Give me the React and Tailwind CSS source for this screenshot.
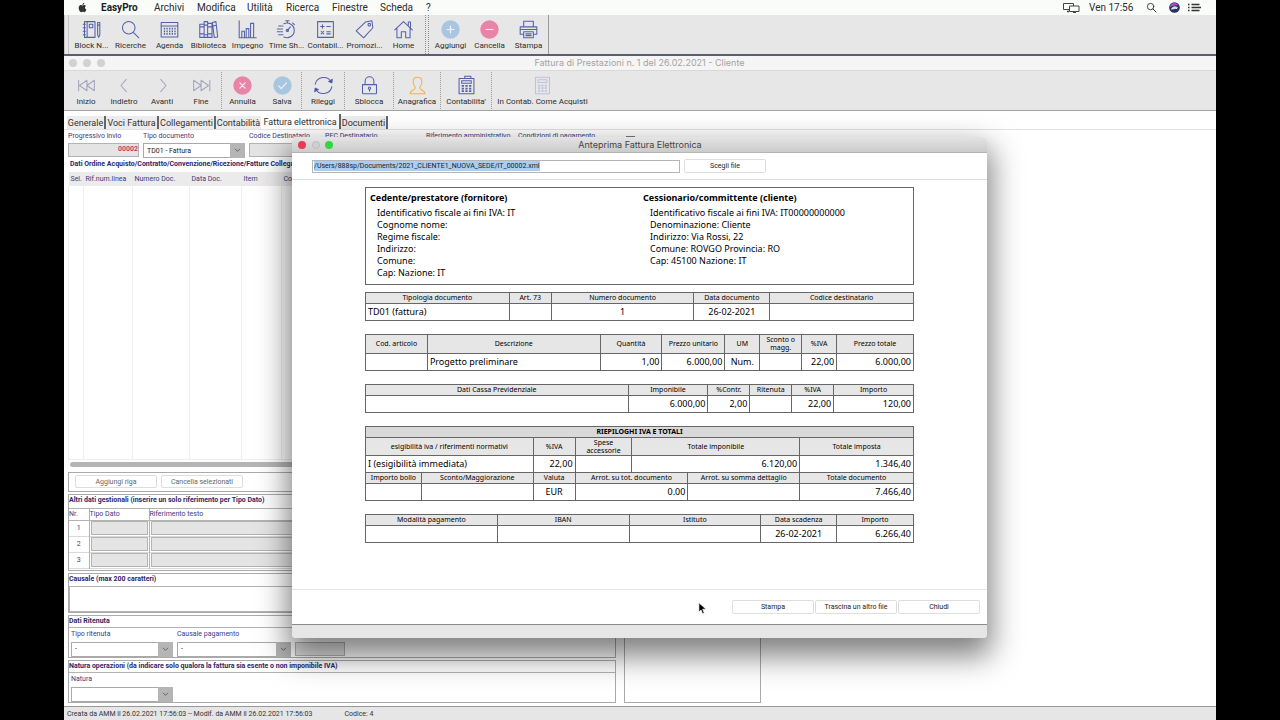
import React from "react";

const NAVY = "#5460ac";

function Icon({ children, size = "size-[21px]", color = NAVY }) {
  return (
    <svg viewBox="0 0 24 24" className={size} fill="none" stroke={color} strokeWidth="1.2" strokeLinecap="round" strokeLinejoin="round" aria-hidden="true">
      {children}
    </svg>
  );
}

const icons = {
  notebook: (
    <Icon>
      <path d="M4 3h12v18H4zM7 3v18M9.500 6h4v4h-4zM2.500 6h2.500M2.500 10h2.500M2.500 14h2.500M2.500 18h2.500" />
      <path d="M19 4h2.500v14L20.200 21 19 18zM19 7h2.500" />
    </Icon>
  ),
  search: (
    <Icon>
      <circle cx="10" cy="10" r="7.200" />
      <path d="m15.500 15.500 6 6" />
    </Icon>
  ),
  agenda: (
    <Icon>
      <path d="M2.500 4h19v16.500h-19zM2.500 8h19" />
      <path d="M5.500 11h13.500M5.500 14h13.500M5.500 17h13.500" strokeWidth="2" strokeDasharray="1.500 1.500" strokeLinecap="butt" />
    </Icon>
  ),
  library: (
    <Icon>
      <path d="M2 6h5v15H2zM7 3h4v18H7zM11 5h5v16h-5zM16.500 4l4-1 2 17.500-4 .5zM2 9h5M2 17h5M7 7h4M7 18h4M11 9h5M11 17h5M17 8l4-.8" />
    </Icon>
  ),
  bars: (
    <Icon>
      <path d="M2.500 2v19.500H22M5.500 21v-7h3v7M10.500 21V11h3v10M15.500 21V5h3.500v16" />
    </Icon>
  ),
  watch: (
    <Icon>
      <path d="M9 5.500a8.300 8.300 0 1 1 0 15M11 2h4M13 2v2.500M19 4.500l2 2M13 13l3.500-4" />
      <path d="M3 8h5M1.500 11.500h6M1.500 14.500h6M3 18h5" strokeDasharray="3 1" />
      <circle cx="13" cy="13" r="1.300" />
    </Icon>
  ),
  calc: (
    <Icon>
      <path d="M3 3h18v18H3zM6.500 8.500h4M8.500 6.500v4M13.500 8.500h4M7 14l3 3M10 14l-3 3M13.500 14.500h4M13.500 17h4" />
    </Icon>
  ),
  tag: (
    <Icon>
      <path d="M13 3.500 20.500 2l1 8L11 21.500 2.500 13.500z" />
      <circle cx="17.500" cy="6.500" r="1.500" />
    </Icon>
  ),
  home: (
    <Icon>
      <path d="M2 12.500 12 3l10 9.500M4.500 11v10.500h5V14.500h5v7h5V11M17.500 7.500V3.500h2.500V10" />
    </Icon>
  ),
  printer: (
    <Icon>
      <path d="M6.500 9V2.500h11V9M6.500 17.500h-4V9h19v8.500h-4M6.500 14.500h11v7h-11zM9 17h6M9 19h6M2.500 12h19" />
    </Icon>
  ),
  first: (
    <Icon color="#a3a6be">
      <path d="M3 6v12M12.500 6v12L4 12zM21 6v12l-8.500-6z" />
    </Icon>
  ),
  prev: (
    <Icon color="#a3a6be">
      <path d="m14 5-6 7 6 7" />
    </Icon>
  ),
  next: (
    <Icon color="#a3a6be">
      <path d="m10 5 6 7-6 7" />
    </Icon>
  ),
  last: (
    <Icon color="#a3a6be">
      <path d="M3 6v12l8.500-6zM11.500 6v12L20 12zM21.500 6v12" />
    </Icon>
  ),
  reload: (
    <Icon>
      <path d="M2.500 10.500a10 10 0 0 1 18.500-2.500M21.500 13.500A10 10 0 0 1 3 16" />
      <path d="m18 7.500 3.500 1.500.5-4zM6 16.500 2.500 15l-.5 4z" fill="#3b478f" />
    </Icon>
  ),
  lock: (
    <Icon>
      <path d="M4 11h16v9.500a1 1 0 0 1-1 1H5a1 1 0 0 1-1-1zM7 11V7a5 5 0 0 1 10 0v4" />
      <circle cx="12" cy="15" r="1.300" />
      <path d="M12 16.500v2" />
    </Icon>
  ),
  person: (
    <Icon color="#f0b252">
      <path d="M12 2.500c-3.300 0-5 2.300-5 5.500 0 2.600 1.400 4.300 2.200 5.500.6 1-.2 2.500-1.700 3.300C5.500 17.800 3.500 18.500 3.500 21.500h17c0-3-2-3.700-4-4.700-1.500-.8-2.300-2.300-1.700-3.300.8-1.200 2.200-2.900 2.200-5.500 0-3.200-1.700-5.500-5-5.500z" />
    </Icon>
  ),
  ledger: (
    <Icon>
      <path d="M3.500 4h17v17.500h-17zM6.500 6.500h11v3h-11zM10 4V1.500h7V4" />
      <path d="M6.500 12.500h11M6.500 15.500h11M6.500 18.500h11" strokeWidth="2" strokeDasharray="2.600 1.600" strokeLinecap="butt" />
    </Icon>
  ),
  ledgerOff: (
    <Icon color="#bfc2dd">
      <path d="M4 2.500h16v19H4zM7 5.500h10v3H7z" />
      <path d="M7 12h10M7 15h10M7 18h10" strokeWidth="2" strokeDasharray="2.300 1.500" strokeLinecap="butt" />
    </Icon>
  ),
};

function Disc({ fill, d }) {
  return (
    <svg viewBox="0 0 24 24" className="size-[21px]" aria-hidden="true">
      <circle cx="12" cy="12" r="10.500" fill={fill} />
      <path d={d} stroke="#eef0fa" strokeWidth="1.400" fill="none" strokeLinecap="round" strokeLinejoin="round" />
    </svg>
  );
}

const discs = {
  add: <Disc fill="#a9c6e0" d="M12 8v8M8 12h8" />,
  remove: <Disc fill="#e884a8" d="M8 12h8" />,
  cancel: <Disc fill="#e884a8" d="m9 9 6 6M15 9l-6 6" />,
  save: <Disc fill="#a9c6e0" d="m7.500 12.500 3 3 6-6.500" />,
};

function ToolButton({ icon, label, width }) {
  return (
    <button type="button" className={`flex shrink-0 flex-col items-center gap-px whitespace-nowrap pt-[4px] text-[8px] leading-[10px] text-[#2c2c2c] ${width}`}>
      {icon}
      <span>{label}</span>
    </button>
  );
}

function Dots() {
  return <span className="my-px w-px shrink-0 border-l border-dotted border-[#9d9d9d]" />;
}

const menus = [
  ["Archivi", "w-[43px]"],
  ["Modifica", "w-[50px]"],
  ["Utilità", "w-[39px]"],
  ["Ricerca", "w-[46px]"],
  ["Finestre", "w-[48px]"],
  ["Scheda", "w-[46px]"],
  ["?", "w-[10px]"],
];

function MenuBar() {
  return (
    <nav className="flex h-[15px] items-center bg-[#fafcfa] text-[10px] leading-[15px] text-[#2b2b2b]">
      <svg viewBox="0 0 24 24" className="ml-[13px] mr-[13px] size-[11px]" fill="#333" aria-label="Apple">
        <path d="M17.400 12.700c0-2.600 2.100-3.800 2.200-3.900-1.200-1.800-3.100-2-3.700-2-1.600-.2-3.100.9-3.900.9s-2-.9-3.300-.9C7 6.800 5.400 7.800 4.500 9.300c-1.800 3.100-.5 7.700 1.300 10.200.9 1.300 1.900 2.700 3.300 2.600 1.300 0 1.800-.8 3.400-.8s2 .8 3.400.8 2.300-1.300 3.200-2.500c1-1.500 1.400-2.900 1.400-3-.1 0-3.100-1.200-3.100-3.900zM14.900 5.100c.7-.9 1.200-2 1-3.200-1 .1-2.200.7-2.900 1.500-.7.800-1.300 2-1.100 3.100 1.100.1 2.300-.6 3-1.400z" />
      </svg>
      <a href="#easypro" className="w-[53px] font-bold text-[#1c1c1c]">EasyPro</a>
      {menus.map(([m, w]) => (
        <a key={m} href="#menu" className={w}>{m}</a>
      ))}
      <div className="ml-auto flex items-center pr-[15px]">
        <svg viewBox="0 0 17 11" className="mr-[9px] h-[11px] w-[17px]" fill="none" stroke="#444" aria-label="Schermi">
          <path d="M6 7.500H.5v-6h10V4M6.500 4h9.500v5.500H6.500z" />
          <path d="M4 9.500h2M10 10.500h3" strokeWidth="1.500" />
        </svg>
        <span className="w-[57px]">Ven 17:56</span>
        <Icon size="size-[11px]" color="#333"><circle cx="10" cy="10" r="7" strokeWidth="2" /><path d="m15 15 7 7" strokeWidth="2" /></Icon>
        <svg viewBox="0 0 12 12" className="ml-[12px] mr-[8px] size-[11px]" aria-label="Siri">
          <circle cx="6" cy="6" r="5.800" fill="#2b2d63" />
          <path d="M1 6a5 5 0 0 1 9.500-2C8 3 4 3.500 1 6z" fill="#b54fc0" />
          <path d="M2 8c2-4 5-4 8-2-2 1-5 3-8 2z" fill="#8fd8f2" />
          <path d="M3 7.500c2-1.500 4-1.500 6 0" stroke="#fff" fill="none" />
        </svg>
        <svg viewBox="0 0 13 9" className="h-[9px] w-[13px]" stroke="#333" strokeWidth="1.300" aria-label="Centro notifiche">
          <path d="M0 1.500h1.500M0 4.500h1.500M0 7.500h1.500M3.500 1.500h8M3.500 4.500h9.500M3.500 7.500h8" />
        </svg>
      </div>
    </nav>
  );
}

function MainToolbar() {
  const a = [
    ["notebook", "Block N..."], ["search", "Ricerche"], ["agenda", "Agenda"], ["library", "Biblioteca"], ["bars", "Impegno"],
    ["watch", "Time Sh..."], ["calc", "Contabil..."], ["tag", "Promozi..."], ["home", "Home"],
  ];
  return (
    <div className="flex h-[41px] border-b-2 border-[#5c5c78] bg-[#e7e7e7]">
      <div className="flex h-full border-r border-[#9a9a9a]">
        <span className="mr-[3px] w-[5px] border-x border-[#c4c4c4]" />
        {a.map(([i, l]) => <ToolButton key={l} icon={icons[i]} label={l} width="w-[39px]" />)}
        <span className="ml-[2px] mr-[2px] w-[4px] border-x border-dotted border-[#8d8d8d]" />
        <ToolButton icon={discs.add} label="Aggiungi" width="w-[39px]" />
        <ToolButton icon={discs.remove} label="Cancella" width="w-[39px]" />
        <ToolButton icon={icons.printer} label="Stampa" width="w-[39px]" />
      </div>
    </div>
  );
}

function WindowToolbar() {
  return (
    <div className="flex h-[40px] border-b border-[#a2a2a2] bg-[#e7e7e7] pl-[3px]">
      <ToolButton icon={icons.first} label="Inizio" width="w-[38px]" />
      <ToolButton icon={icons.prev} label="Indietro" width="w-[38px]" />
      <ToolButton icon={icons.next} label="Avanti" width="w-[38px]" />
      <ToolButton icon={icons.last} label="Fine" width="w-[40px]" />
      <Dots />
      <ToolButton icon={discs.cancel} label="Annulla" width="w-[41px]" />
      <ToolButton icon={discs.save} label="Salva" width="w-[38px]" />
      <Dots />
      <ToolButton icon={icons.reload} label="Rileggi" width="w-[42px]" />
      <Dots />
      <ToolButton icon={icons.lock} label="Sblocca" width="w-[48px]" />
      <Dots />
      <ToolButton icon={icons.person} label="Anagrafica" width="w-[46px]" />
      <Dots />
      <ToolButton icon={icons.ledger} label="Contabilita'" width="w-[50px]" />
      <Dots />
      <ToolButton icon={icons.ledgerOff} label="In Contab. Come Acquisti" width="w-[101px]" />
    </div>
  );
}

function Tabs() {
  const base = "h-[13px] shrink-0 whitespace-nowrap border-r-2 border-[#666] bg-[#ececec] text-center text-[9px] leading-[14px]";
  return (
    <div role="tablist" className="flex h-[19px] items-end border-b border-[#e2e2e2] pl-[3px] text-[#333]">
      <button type="button" role="tab" className={`${base} w-[39px]`}>Generale</button>
      <button type="button" role="tab" className={`${base} w-[53px]`}>Voci Fattura</button>
      <button type="button" role="tab" className={`${base} w-[57px]`}>Collegamenti</button>
      <button type="button" role="tab" className="h-[13px] w-[45px] shrink-0 bg-[#ececec] text-center text-[9px] leading-[14px]">Contabilità</button>
      <button type="button" role="tab" aria-selected="true" className="h-[15px] w-[80px] shrink-0 whitespace-nowrap border-r-2 border-[#666] bg-white text-center text-[9px] leading-[14px]">Fattura elettronica</button>
      <button type="button" role="tab" className={`${base} w-[47px]`}>Documenti</button>
    </div>
  );
}

function Select({ id, options, className }) {
  return (
    <span className={`grid h-[15px] shrink-0 ${className}`}>
      <select id={id} className="col-start-1 row-start-1 appearance-none rounded-none border border-[#a9a9a9] bg-white pl-[3px] text-[7px] leading-[12px] text-[#222]">
        {options.map((o) => <option key={o}>{o}</option>)}
      </select>
      <span className="pointer-events-none col-start-1 row-start-1 flex w-[15px] items-center justify-center justify-self-end bg-[#b5b5b5]">
        <svg viewBox="0 0 8 6" className="h-[5px] w-[7px]" fill="none" stroke="#555"><path d="m1 1 3 3 3-3" /></svg>
      </span>
    </span>
  );
}

const box = "border border-[#aaaaaa]";
const heading = "h-[12px] text-[7px] font-bold leading-[10px] text-[#2e2569]";
const lbl = "whitespace-nowrap text-[7px] leading-[10px] text-[#403a80]";
const grayInput = "border border-[#b3b3b3] bg-[#e4e4e4]";
const plainButton = "rounded-[2px] border border-[#dedede] bg-white";

function FieldsRow() {
  return (
    <div className="flex h-[29px] gap-1 pt-px">
      <div className="flex w-[71px] flex-col gap-[2px]">
        <label htmlFor="prog" className={lbl}>Progressivo invio</label>
        <input id="prog" defaultValue="00002" className={`h-[14px] w-full pb-[2px] text-right text-[7px] font-bold text-[#c8405f] ${grayInput}`} />
      </div>
      <div className="flex w-[102px] flex-col gap-[2px]">
        <label htmlFor="tipodoc" className={lbl}>Tipo documento</label>
        <Select id="tipodoc" options={["TD01 - Fattura"]} className="w-[102px]" />
      </div>
      {[
        ["coddest", "Codice Destinatario", "w-[72px]"],
        ["pec", "PEC Destinatario", "w-[97px]"],
        ["rifamm", "Riferimento amministrativo", "w-[88px]"],
        ["cond", "Condizioni di pagamento", "w-[104px]"],
      ].map(([id, l, w]) => (
        <div key={id} className={`flex shrink-0 flex-col gap-[2px] ${w}`}>
          <label htmlFor={id} className={lbl}>{l}</label>
          <input id={id} className={`h-[14px] w-full ${grayInput}`} />
        </div>
      ))}
      <input type="checkbox" aria-label="Seleziona" className="mt-[5px] size-[9px] appearance-none border border-[#777] bg-white" />
    </div>
  );
}

function OrderPanel() {
  const cols = [["Sel.", "w-[15px]"], ["Rif.num.linea", "w-[49px]"], ["Numero Doc.", "w-[57px]"], ["Data Doc.", "w-[52px]"], ["Item", "w-[40px]"], ["Codice commessa", ""]];
  return (
    <section>
      <h2 className="h-[13px] pl-[2px] text-[7px] font-bold leading-[11px] text-[#2e2569]">Dati Ordine Acquisto/Contratto/Convenzione/Ricezione/Fatture Collegate</h2>
      <table className="w-full table-fixed border-collapse text-left">
        <thead>
          <tr className="h-[14px] bg-[#ebebeb]">
            {cols.map(([c, w]) => <th key={c} className={`whitespace-nowrap p-0 pl-[2px] text-[7px] font-normal leading-[10px] text-[#403a80] ${w}`}>{c}</th>)}
          </tr>
        </thead>
        <tbody>
          <tr className="h-[273px]">
            {cols.map(([c]) => <td key={c} className="border-x border-b border-[#eeeeee] p-0" />)}
          </tr>
        </tbody>
      </table>
      <div className="mb-[5px] ml-[2px] mt-[2px] h-[5px] rounded-full bg-[#b5b5b5]" />
      <div className={`flex h-[20px] items-center gap-1 pl-[6px] ${box}`}>
        <button type="button" className={`h-[13px] w-[82px] text-[7px] leading-[10px] text-[#666] ${plainButton}`}>Aggiungi riga</button>
        <button type="button" className={`h-[13px] w-[82px] text-[7px] leading-[10px] text-[#666] ${plainButton}`}>Cancella selezionati</button>
      </div>
    </section>
  );
}

function OtherData() {
  return (
    <section className={`pb-px ${box}`}>
      <h2 className="h-[13px] text-[7px] font-bold leading-[10px] text-[#2e2569]">Altri dati gestionali (inserire un solo riferimento per Tipo Dato)</h2>
      <table className="w-full table-fixed border-collapse">
        <thead>
          <tr className="h-[12px] text-left text-[7px] leading-[10px] text-[#403a80]">
            <th className="w-[20px] border-y border-r border-[#b3b3b3] p-0 font-normal">Nr.</th>
            <th className="w-[60px] border border-[#b3b3b3] p-0 font-normal">Tipo Dato</th>
            <th className="border-y border-l border-[#b3b3b3] p-0 font-normal">Riferimento testo</th>
          </tr>
        </thead>
        <tbody>
          {[1, 2, 3].map((n) => (
            <tr key={n} className="h-[16px] border-b border-[#d9d9d9]">
              <td className="border-r border-[#b3b3b3] p-0 text-center text-[7px] leading-[10px] text-[#403a80]">{n}</td>
              <td className="border-r border-[#b3b3b3] px-px py-0"><input aria-label={`Tipo dato ${n}`} className={`block h-[14px] w-full ${grayInput}`} /></td>
              <td className="px-px py-0"><input aria-label={`Riferimento testo ${n}`} className={`block h-[14px] w-full ${grayInput}`} /></td>
            </tr>
          ))}
        </tbody>
      </table>
    </section>
  );
}

function FormArea() {
  return (
    <div className="flex grow flex-col pb-[2px] pl-1">
      <FieldsRow />
      <div className="flex gap-[8px]">
        <div className="flex w-[548px] shrink-0 flex-col gap-[2px]">
          <OrderPanel />
          <OtherData />
          <section className={box}>
            <h2 className={heading}><label htmlFor="causale">Causale (max 200 caratteri)</label></h2>
            <textarea id="causale" className="block h-[26px] w-full resize-none border border-[#b3b3b3] bg-white" />
          </section>
          <section className={`h-[43px] ${box}`}>
            <h2 className={`border-b border-[#b3b3b3] ${heading}`}>Dati Ritenuta</h2>
            <div className="flex gap-1 pl-[2px] pt-px">
              <div className="flex w-[102px] flex-col gap-[3px]">
                <label htmlFor="ritenuta" className={lbl}>Tipo ritenuta</label>
                <Select id="ritenuta" options={["-"]} className="w-[102px]" />
              </div>
              <div className="flex w-[114px] flex-col gap-[3px]">
                <label htmlFor="pagamento" className={lbl}>Causale pagamento</label>
                <Select id="pagamento" options={["-"]} className="w-[114px]" />
              </div>
              <input aria-label="Aliquota" className={`mt-[13px] h-[14px] w-[50px] ${grayInput}`} />
            </div>
          </section>
          <section className={`h-[43px] ${box}`}>
            <h2 className={`border-b border-[#b3b3b3] ${heading}`}>Natura operazioni (da indicare solo qualora la fattura sia esente o non imponibile IVA)</h2>
            <div className="flex flex-col gap-[3px] pl-[2px] pt-px">
              <label htmlFor="natura" className={lbl}>Natura</label>
              <Select id="natura" options={[""]} className="w-[102px]" />
            </div>
          </section>
        </div>
        <aside className={`w-[137px] shrink-0 ${box}`} />
      </div>
    </div>
  );
}

const th = "border border-[#666] bg-[#e6e6e6] px-[3px] py-0 text-center text-[7px] font-normal leading-[8px]";
const td = "border border-[#666] px-[2px] py-0 text-[9px] leading-[12px]";

function Cols({ list }) {
  return <colgroup>{list.map((w, i) => <col key={i} style={{ width: `${(w / 549) * 100}%` }} />)}</colgroup>;
}

function DocTable({ cols, head, row, tall }) {
  return (
    <table className="w-full table-fixed border-collapse">
      <Cols list={cols} />
      <thead>
        <tr className={tall ? "h-[19px]" : "h-[11px]"}>
          {head.map((h) => <th key={h} className={th}>{h}</th>)}
        </tr>
      </thead>
      <tbody>
        <tr className="h-[17px]">
          {row.map(([v, a], i) => <td key={i} className={`${td} ${a}`}>{v}</td>)}
        </tr>
      </tbody>
    </table>
  );
}

const L = "text-left";
const C = "text-center";
const R = "text-right";

function Party({ title, lines }) {
  return (
    <div className="w-[273px] shrink-0 last:w-auto">
      <h3 className="mb-[3px] text-[9px] font-bold leading-[12px]">{title}</h3>
      {lines.map((l) => <p key={l} className="pl-[7px]">{l}</p>)}
    </div>
  );
}

function Invoice() {
  return (
    <article className="mx-[73px] mt-[7px] grow font-['Noto_Sans','DejaVu_Sans',sans-serif] text-[9px] leading-[12px] text-black">
      <div className="mb-[7px] flex h-[98px] border border-[#666] px-1 pt-1">
        <Party title="Cedente/prestatore (fornitore)" lines={["Identificativo fiscale ai fini IVA: IT", "Cognome nome:", "Regime fiscale:", "Indirizzo:", "Comune:", "Cap: Nazione: IT"]} />
        <Party title="Cessionario/committente (cliente)" lines={["Identificativo fiscale ai fini IVA: IT00000000000", "Denominazione: Cliente", "Indirizzo: Via Rossi, 22", "Comune: ROVGO Provincia: RO", "Cap: 45100 Nazione: IT"]} />
      </div>
      <div className="flex flex-col gap-[13px]">
        <DocTable
          cols={[144, 42, 143, 76, 144]}
          head={["Tipologia documento", "Art. 73", "Numero documento", "Data documento", "Codice destinatario"]}
          row={[["TD01 (fattura)", L], ["", L], ["1", C], ["26-02-2021", C], ["", L]]}
        />
        <DocTable
          tall
          cols={[62, 173, 62, 63, 35, 42, 35, 77]}
          head={["Cod. articolo", "Descrizione", "Quantità", "Prezzo unitario", "UM", "Sconto o magg.", "%IVA", "Prezzo totale"]}
          row={[["", L], ["Progetto preliminare", L], ["1,00", R], ["6.000,00", R], ["Num.", C], ["", L], ["22,00", R], ["6.000,00", R]]}
        />
        <DocTable
          cols={[263, 80, 42, 42, 42, 80]}
          head={["Dati Cassa Previdenziale", "Imponibile", "%Contr.", "Ritenuta", "%IVA", "Importo"]}
          row={[["", L], ["6.000,00", R], ["2,00", R], ["", L], ["22,00", R], ["120,00", R]]}
        />
        <table className="w-full table-fixed border-collapse">
          <Cols list={[56, 112, 42, 57, 56, 112, 114]} />
          <tbody>
            <tr className="h-[11px]"><th colSpan={7} className="border border-[#666] bg-[#d9d9d9] p-0 text-[7px] font-bold leading-[8px]">RIEPILOGHI IVA E TOTALI</th></tr>
            <tr className="h-[18px]">
              <th colSpan={2} className={th}>esigibilità iva / riferimenti normativi</th>
              <th className={th}>%IVA</th>
              <th className={th}>Spese accessorie</th>
              <th colSpan={2} className={th}>Totale imponibile</th>
              <th className={th}>Totale imposta</th>
            </tr>
            <tr className="h-[17px]">
              <td colSpan={2} className={td}>I (esigibilità immediata)</td>
              <td className={`${td} text-right`}>22,00</td>
              <td className={td} />
              <td colSpan={2} className={`${td} text-right`}>6.120,00</td>
              <td className={`${td} text-right`}>1.346,40</td>
            </tr>
            <tr className="h-[11px]">
              <th className={th}>Importo bollo</th>
              <th className={th}>Sconto/Maggiorazione</th>
              <th className={th}>Valuta</th>
              <th colSpan={2} className={th}>Arrot. su tot. documento</th>
              <th className={th}>Arrot. su somma dettaglio</th>
              <th className={th}>Totale documento</th>
            </tr>
            <tr className="h-[17px]">
              <td className={td} />
              <td className={td} />
              <td className={`${td} text-center`}>EUR</td>
              <td colSpan={2} className={`${td} text-right`}>0.00</td>
              <td className={td} />
              <td className={`${td} text-right`}>7.466,40</td>
            </tr>
          </tbody>
        </table>
        <DocTable
          cols={[132, 132, 132, 76, 77]}
          head={["Modalità pagamento", "IBAN", "Istituto", "Data scadenza", "Importo"]}
          row={[["", L], ["", L], ["", L], ["26-02-2021", C], ["6.266,40", R]]}
        />
      </div>
    </article>
  );
}

function Preview() {
  const small = `h-[14px] w-[82px] text-[7px] leading-[10px] text-[#222] ${plainButton}`;
  return (
    <div role="dialog" aria-label="Anteprima Fattura Elettronica" className="absolute left-[228px] top-[137px] flex min-h-[501px] w-[695px] flex-col overflow-clip rounded-[4px] bg-white shadow-[0_14px_30px_4px_rgba(0,0,0,0.5)]">
      <header className="flex h-[16px] items-center gap-[5px] border-b border-[#b5b5b5] bg-linear-to-b from-[#e4e4e4] to-[#cbcbcb] pl-[6px]">
        <button type="button" aria-label="Chiudi finestra" className="size-[8px] rounded-full bg-[#ea3a56]" />
        <button type="button" aria-label="Riduci" className="ml-px size-[8px] rounded-full border border-[#bcbcbc] bg-[#cfcfcf]" />
        <button type="button" aria-label="Ingrandisci" className="size-[8px] rounded-full bg-[#33d540]" />
        <h2 className="grow pr-[45px] text-center font-['Inter','Liberation_Sans',sans-serif] text-[9px] leading-[14px] text-[#444]">Anteprima Fattura Elettronica</h2>
      </header>
      <div className="flex h-[27px] items-center gap-1 border-b border-[#dedede] pl-[20px]">
        <div className="flex h-[13px] w-[368px] items-center border border-[#b5b5b5] pl-px">
          <input aria-label="Percorso file" defaultValue="/Users/888sp/Documents/2021_CLIENTE1_NUOVA_SEDE/IT_00002.xml" className="h-[10px] w-[226px] bg-[#a9cdf3] text-[7px] leading-[10px] text-[#222]" />
        </div>
        <button type="button" className={small}>Scegli file</button>
      </div>
      <Invoice />
      <footer className="flex h-[35px] items-center justify-end gap-px border-t border-[#e4e4e4] pr-[7px]">
        <button type="button" className={small}>Stampa</button>
        <button type="button" className={small}>Trascina un altro file</button>
        <button type="button" className={small}>Chiudi</button>
      </footer>
      <div className="h-[14px] border-t border-[#8a8a8a] bg-[#e6e6e6]" />
    </div>
  );
}

export default function App() {
  return (
    <div className="flex min-h-screen bg-black px-16 font-['Roboto','Liberation_Sans',sans-serif]">
      <main className="relative flex min-w-0 grow flex-col overflow-clip bg-white">
        <MenuBar />
        <MainToolbar />
        <div className="flex h-[15px] items-center gap-[6px] border-b border-[#d9d9d9] bg-[#f5f5f5] pl-[5px]">
          <span className="size-[8px] rounded-full bg-[#d2d2d2]" />
          <span className="size-[8px] rounded-full bg-[#d2d2d2]" />
          <span className="size-[8px] rounded-full bg-[#d2d2d2]" />
          <h1 className="grow pr-[48px] text-center font-['Inter','Liberation_Sans',sans-serif] text-[9px] leading-[14px] text-[#a3a3a3]">Fattura di Prestazioni n. 1 del 26.02.2021 - Cliente</h1>
        </div>
        <WindowToolbar />
        <Tabs />
        <FormArea />
        <footer className="flex h-[14px] items-center gap-[32px] border-t border-[#9a9a9a] bg-[#e6e6e6] pl-[3px] text-[7px] leading-[10px] text-[#333]">
          <span>Creata da AMM il 26.02.2021 17:56:03 -- Modif. da AMM il 26.02.2021 17:56:03</span>
          <span>Codice: 4</span>
        </footer>
        <Preview />
        <svg viewBox="0 0 12 18" className="pointer-events-none absolute left-[634px] top-[602px] h-[13px] w-[9px]" aria-hidden="true">
          <path d="M1 1v13l3-3 2.200 5.500 2.300-1L6.300 10H11z" fill="#000" stroke="#fff" />
        </svg>
      </main>
    </div>
  );
}
